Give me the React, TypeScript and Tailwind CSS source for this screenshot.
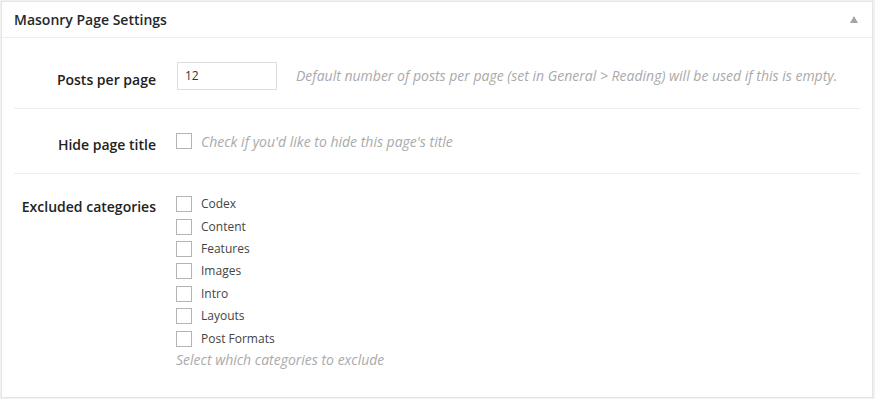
import React from 'react';

const categories = ['Codex', 'Content', 'Features', 'Images', 'Intro', 'Layouts', 'Post Formats'];

const Box: React.FC<{ className?: string }> = ({ className = '' }) => (
    <span className={`inline-block w-4 h-4 border border-[#b4b4b4] bg-white shrink-0 ${className}`}></span>
);

const App: React.FC = () => {
    return (
        <div className="w-[875px] h-[399px] bg-[#f1f1f1] pl-px pt-px" style={{ fontFamily: '"Open Sans", sans-serif' }}>
            <div className="w-[872px] h-[397px] bg-white border border-[#e5e5e5]">
                <div className="h-[36px] border-b border-[#eeeeee] flex items-center justify-between pl-[12px] pr-[14px]">
                    <h2 className="text-[14px] font-semibold text-[#23282d]">Masonry Page Settings</h2>
                    <span className="w-0 h-0 border-l-[4px] border-r-[4px] border-b-[7px] border-l-transparent border-r-transparent border-b-[#a0a5aa]"></span>
                </div>
                <div className="px-[12px]">
                    {/* posts per page */}
                    <div className="flex items-center h-[71px] border-b border-[#eeeeee] pt-[5px]">
                        <label className="w-[142px] pt-[8px] text-right text-[14px] font-semibold text-[#222]">Posts per page</label>
                        <input
                            type="text"
                            defaultValue="12"
                            className="ml-[21px] w-[100px] h-[28px] border border-[#dddddd] px-[7px] text-[12px] text-[#333] outline-none"
                        />
                        <span className="ml-[19px] text-[14px] italic text-[#aaaaaa]">Default number of posts per page (set in General &gt; Reading) will be used if this is empty.</span>
                    </div>
                    {/* hide title */}
                    <div className="flex items-center h-[65px] border-b border-[#eeeeee]">
                        <label className="w-[142px] pt-[6px] text-right text-[14px] font-semibold text-[#222]">Hide page title</label>
                        <Box className="ml-[20px]" />
                        <span className="ml-[9px] text-[14px] italic text-[#aaaaaa]">Check if you'd like to hide this page's title</span>
                    </div>
                    {/* excluded categories */}
                    <div className="flex pt-[23px]">
                        <label className="w-[142px] text-right text-[14px] font-semibold text-[#222] leading-[20px]">Excluded categories</label>
                        <div className="ml-[20px] -mt-[4px] flex flex-col">
                            {categories.map((c) => (
                                <div key={c} className="flex items-center h-[22.4px]">
                                    <Box />
                                    <span className="ml-[9px] text-[12px] text-[#444]">{c}</span>
                                </div>
                            ))}
                            <span className="text-[14px] italic text-[#aaaaaa] -mt-[1px]">Select which categories to exclude</span>
                        </div>
                    </div>
                </div>
            </div>
        </div>
    );
};

export default App;
